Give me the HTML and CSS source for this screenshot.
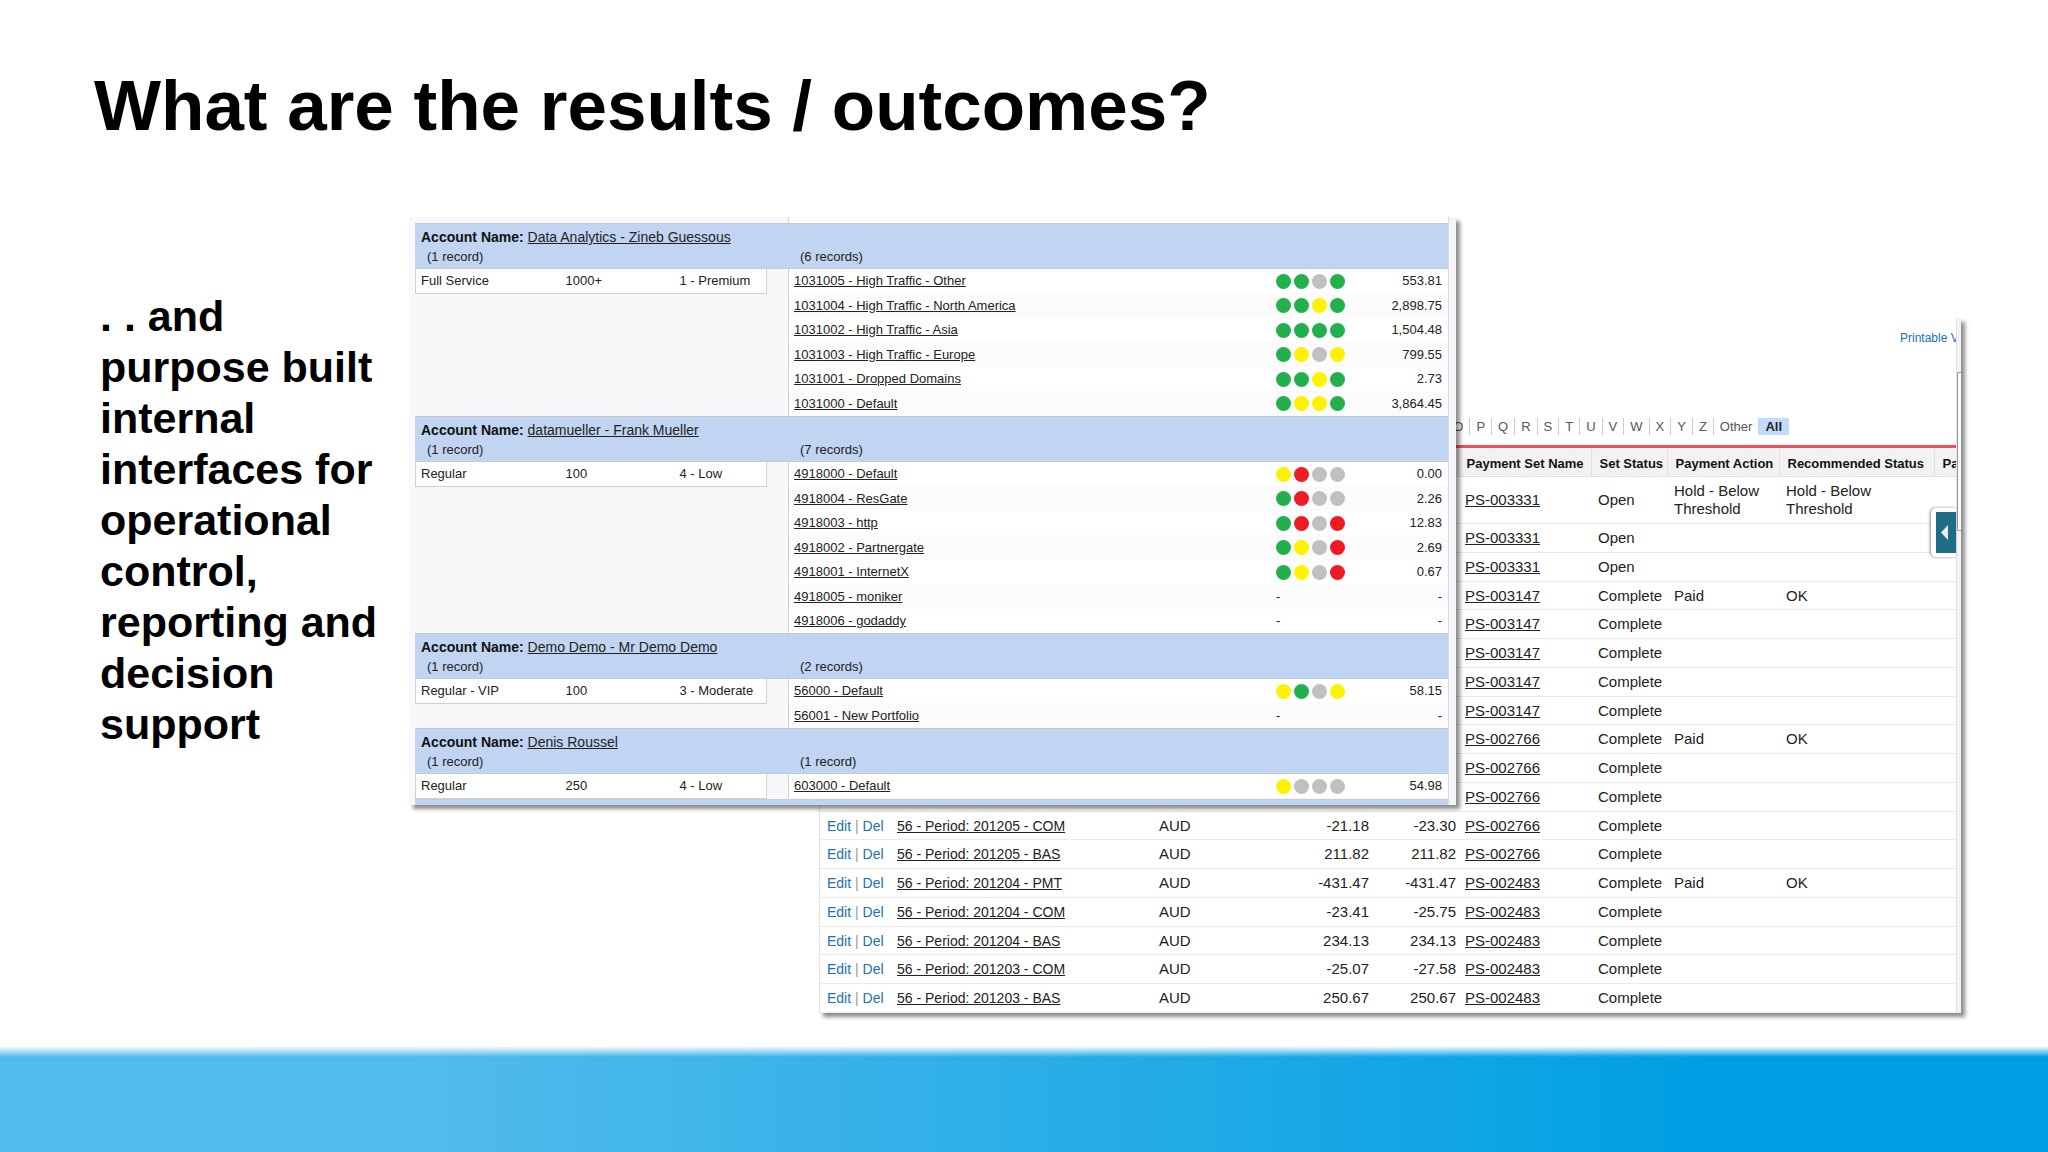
FILE: index.html
```html
<!DOCTYPE html>
<html lang="en">
<head>
<meta charset="utf-8">
<title>What are the results / outcomes?</title>
<link rel="stylesheet" href="styles.css">
</head>
<body>
<div class="slide">
<header class="slide-head"><h1>What are the results / outcomes?</h1></header>
<main class="slide-body">
<p class="lead">. . and purpose built internal interfaces for operational control, reporting and decision support</p>
<div class="stage">

<section class="window payments">
<div class="pay-main">
<div class="pay-top"><a class="printable" href="#">Printable View</a></div>
<nav class="alpha">
<a href="#">O</a><a href="#">P</a><a href="#">Q</a><a href="#">R</a><a href="#">S</a><a href="#">T</a><a href="#">U</a><a href="#">V</a><a href="#">W</a><a href="#">X</a><a href="#">Y</a><a href="#">Z</a><a href="#">Other</a><a class="current" href="#">All</a>
</nav>
<table class="pay-table">
<colgroup><col class="c-act"><col class="c-name"><col class="c-cur"><col class="c-amt"><col class="c-total"><col class="c-set"><col class="c-status"><col class="c-action"><col class="c-rec"><col class="c-last"></colgroup>
<thead><tr><th></th><th></th><th></th><th></th><th></th><th>Payment Set Name</th><th>Set Status</th><th>Payment Action</th><th>Recommended Status</th><th>Payee</th></tr></thead>
<tbody>
<tr class="tall"><td colspan="5"></td><td><a href="#">PS-003331</a></td><td>Open</td><td>Hold - Below Threshold</td><td class="rec">Hold - Below Threshold</td><td></td></tr>
<tr><td colspan="5"></td><td><a href="#">PS-003331</a></td><td>Open</td><td></td><td></td><td></td></tr>
<tr><td colspan="5"></td><td><a href="#">PS-003331</a></td><td>Open</td><td></td><td></td><td></td></tr>
<tr><td colspan="5"></td><td><a href="#">PS-003147</a></td><td>Complete</td><td>Paid</td><td>OK</td><td></td></tr>
<tr><td colspan="5"></td><td><a href="#">PS-003147</a></td><td>Complete</td><td></td><td></td><td></td></tr>
<tr><td colspan="5"></td><td><a href="#">PS-003147</a></td><td>Complete</td><td></td><td></td><td></td></tr>
<tr><td colspan="5"></td><td><a href="#">PS-003147</a></td><td>Complete</td><td></td><td></td><td></td></tr>
<tr><td colspan="5"></td><td><a href="#">PS-003147</a></td><td>Complete</td><td></td><td></td><td></td></tr>
<tr><td colspan="5"></td><td><a href="#">PS-002766</a></td><td>Complete</td><td>Paid</td><td>OK</td><td></td></tr>
<tr><td colspan="5"></td><td><a href="#">PS-002766</a></td><td>Complete</td><td></td><td></td><td></td></tr>
<tr><td colspan="5"></td><td><a href="#">PS-002766</a></td><td>Complete</td><td></td><td></td><td></td></tr>
<tr><td class="ops"><a href="#">Edit</a> | <a href="#">Del</a></td><td class="name"><a href="#">56 - Period: 201205 - COM</a></td><td>AUD</td><td class="num">-21.18</td><td class="num">-23.30</td><td><a href="#">PS-002766</a></td><td>Complete</td><td></td><td></td><td></td></tr>
<tr><td class="ops"><a href="#">Edit</a> | <a href="#">Del</a></td><td class="name"><a href="#">56 - Period: 201205 - BAS</a></td><td>AUD</td><td class="num">211.82</td><td class="num">211.82</td><td><a href="#">PS-002766</a></td><td>Complete</td><td></td><td></td><td></td></tr>
<tr><td class="ops"><a href="#">Edit</a> | <a href="#">Del</a></td><td class="name"><a href="#">56 - Period: 201204 - PMT</a></td><td>AUD</td><td class="num">-431.47</td><td class="num">-431.47</td><td><a href="#">PS-002483</a></td><td>Complete</td><td>Paid</td><td>OK</td><td></td></tr>
<tr><td class="ops"><a href="#">Edit</a> | <a href="#">Del</a></td><td class="name"><a href="#">56 - Period: 201204 - COM</a></td><td>AUD</td><td class="num">-23.41</td><td class="num">-25.75</td><td><a href="#">PS-002483</a></td><td>Complete</td><td></td><td></td><td></td></tr>
<tr><td class="ops"><a href="#">Edit</a> | <a href="#">Del</a></td><td class="name"><a href="#">56 - Period: 201204 - BAS</a></td><td>AUD</td><td class="num">234.13</td><td class="num">234.13</td><td><a href="#">PS-002483</a></td><td>Complete</td><td></td><td></td><td></td></tr>
<tr><td class="ops"><a href="#">Edit</a> | <a href="#">Del</a></td><td class="name"><a href="#">56 - Period: 201203 - COM</a></td><td>AUD</td><td class="num">-25.07</td><td class="num">-27.58</td><td><a href="#">PS-002483</a></td><td>Complete</td><td></td><td></td><td></td></tr>
<tr><td class="ops"><a href="#">Edit</a> | <a href="#">Del</a></td><td class="name"><a href="#">56 - Period: 201203 - BAS</a></td><td>AUD</td><td class="num">250.67</td><td class="num">250.67</td><td><a href="#">PS-002483</a></td><td>Complete</td><td></td><td></td><td></td></tr>
</tbody>
</table>
<button class="side-tab" type="button" aria-label="Open sidebar"><svg viewBox="0 0 20 41" width="20" height="41"><rect width="20" height="41" fill="#1f6c86"/><path d="M5 20.500L12 13V28Z" fill="#e8eef0"/></svg></button>
</div>
<div class="rail"><div class="thumb"></div></div>
</section>

<section class="window accounts">
<div class="strip"></div>

<article class="account">
<div class="acc-head"><p class="title"><b>Account Name:</b> <a href="#">Data Analytics - Zineb Guessous</a></p><p>(1 record)</p><p>(6 records)</p></div>
<div class="acc-body">
<div class="acc-left"><table class="plan"><tr><td>Full Service</td><td>1000+</td><td>1 - Premium</td></tr></table></div>
<table class="folios">
<tr><td><a href="#">1031005 - High Traffic - Other</a></td><td><span class="dots"><i class="g"></i><i class="g"></i><i></i><i class="g"></i></span></td><td>553.81</td></tr>
<tr><td><a href="#">1031004 - High Traffic - North America</a></td><td><span class="dots"><i class="g"></i><i class="g"></i><i class="y"></i><i class="g"></i></span></td><td>2,898.75</td></tr>
<tr><td><a href="#">1031002 - High Traffic - Asia</a></td><td><span class="dots"><i class="g"></i><i class="g"></i><i class="g"></i><i class="g"></i></span></td><td>1,504.48</td></tr>
<tr><td><a href="#">1031003 - High Traffic - Europe</a></td><td><span class="dots"><i class="g"></i><i class="y"></i><i></i><i class="y"></i></span></td><td>799.55</td></tr>
<tr><td><a href="#">1031001 - Dropped Domains</a></td><td><span class="dots"><i class="g"></i><i class="g"></i><i class="y"></i><i class="g"></i></span></td><td>2.73</td></tr>
<tr><td><a href="#">1031000 - Default</a></td><td><span class="dots"><i class="g"></i><i class="y"></i><i class="y"></i><i class="g"></i></span></td><td>3,864.45</td></tr>
</table>
</div>
</article>

<article class="account">
<div class="acc-head"><p class="title"><b>Account Name:</b> <a href="#">datamueller - Frank Mueller</a></p><p>(1 record)</p><p>(7 records)</p></div>
<div class="acc-body">
<div class="acc-left"><table class="plan"><tr><td>Regular</td><td>100</td><td>4 - Low</td></tr></table></div>
<table class="folios">
<tr><td><a href="#">4918000 - Default</a></td><td><span class="dots"><i class="y"></i><i class="r"></i><i></i><i></i></span></td><td>0.00</td></tr>
<tr><td><a href="#">4918004 - ResGate</a></td><td><span class="dots"><i class="g"></i><i class="r"></i><i></i><i></i></span></td><td>2.26</td></tr>
<tr><td><a href="#">4918003 - http</a></td><td><span class="dots"><i class="g"></i><i class="r"></i><i></i><i class="r"></i></span></td><td>12.83</td></tr>
<tr><td><a href="#">4918002 - Partnergate</a></td><td><span class="dots"><i class="g"></i><i class="y"></i><i></i><i class="r"></i></span></td><td>2.69</td></tr>
<tr><td><a href="#">4918001 - InternetX</a></td><td><span class="dots"><i class="g"></i><i class="y"></i><i></i><i class="r"></i></span></td><td>0.67</td></tr>
<tr><td><a href="#">4918005 - moniker</a></td><td>-</td><td>-</td></tr>
<tr><td><a href="#">4918006 - godaddy</a></td><td>-</td><td>-</td></tr>
</table>
</div>
</article>

<article class="account">
<div class="acc-head"><p class="title"><b>Account Name:</b> <a href="#">Demo Demo - Mr Demo Demo</a></p><p>(1 record)</p><p>(2 records)</p></div>
<div class="acc-body">
<div class="acc-left"><table class="plan"><tr><td>Regular - VIP</td><td>100</td><td>3 - Moderate</td></tr></table></div>
<table class="folios">
<tr><td><a href="#">56000 - Default</a></td><td><span class="dots"><i class="y"></i><i class="g"></i><i></i><i class="y"></i></span></td><td>58.15</td></tr>
<tr><td><a href="#">56001 - New Portfolio</a></td><td>-</td><td>-</td></tr>
</table>
</div>
</article>

<article class="account">
<div class="acc-head"><p class="title"><b>Account Name:</b> <a href="#">Denis Roussel</a></p><p>(1 record)</p><p>(1 record)</p></div>
<div class="acc-body">
<div class="acc-left"><table class="plan"><tr><td>Regular</td><td>250</td><td>4 - Low</td></tr></table></div>
<table class="folios">
<tr><td><a href="#">603000 - Default</a></td><td><span class="dots"><i class="y"></i><i></i><i></i><i></i></span></td><td>54.98</td></tr>
</table>
</div>
</article>
<div class="next-head"></div>
</section>

</div>
</main>
<footer class="band"></footer>
</div>
</body>
</html>
```

FILE: styles.css
```css
* { box-sizing: border-box; }

body {
  margin: 0;
  background: #fff;
  color: #222;
  font-family: "Liberation Sans", Arial, sans-serif;
}

h1, p { margin: 0; }
table { border-collapse: collapse; border-spacing: 0; }
td, th { padding: 0; }
a { color: inherit; }

.slide {
  display: flex;
  flex-direction: column;
  min-height: 100vh;
}

.slide-head { padding: 64px 94px 0; }

.slide-head h1 {
  color: #000;
  font-size: 71px;
  line-height: 84px;
}

.slide-body {
  display: grid;
  grid-template-columns: 309px minmax(0, 1fr);
  padding: 69px 87px 33px 100px;
}

.lead {
  padding: 74px 18px 0 0;
  color: #000;
  font-size: 43px;
  font-weight: bold;
  line-height: 51px;
}

/* The two windows share the middle column, so they overlap. */
.stage {
  display: grid;
  grid-template-columns: minmax(0, 410fr) minmax(0, 637fr) minmax(0, 505fr);
  align-items: start;
}

.window { box-shadow: 4px 4px 4px rgba(0, 0, 0, .45); }

/* Accounts window */
.accounts {
  grid-column: 1 / 3;
  grid-row: 1;
  z-index: 1;
  padding: 0 8px 0 6px;
  background: linear-gradient(to left, #f3f5f9 7px, #d9dce2 7px, #d9dce2 8px, #f8f8fa 8px);
  font-size: 13px;
}

.strip {
  height: 6px;
  margin-left: 373px;
  border-left: 1px solid #d4d4d8;
  background: #fff;
}

.acc-head {
  display: grid;
  grid-template-columns: 373px minmax(0, 1fr);
  padding: 4px 0 2px;
  border: solid #c5cad6;
  border-width: 1px 0;
  background: #c1d4f1;
  line-height: 19px;
}

.acc-head p { padding-left: 12px; }

.acc-head .title {
  grid-column: 1 / 3;
  padding-left: 6px;
  font-size: 14px;
}

.acc-head b { color: #111; }

.acc-body {
  display: grid;
  grid-template-columns: 373px minmax(0, 1fr);
  align-items: start;
  line-height: 22px;
}

.plan {
  width: 352px;
  height: 25px;
  table-layout: fixed;
  border: solid #d0d0d4;
  border-width: 0 1px 1px;
  background: #fff;
}

.plan td { padding-left: 5px; }
.plan td:nth-child(1) { width: 145px; }
.plan td:nth-child(2) { width: 114px; }

.folios {
  width: 100%;
  table-layout: fixed;
  border-left: 1px solid #d4d4d8;
  background: #fff;
}

.folios tr:nth-child(odd) { height: 24px; }
.folios tr:nth-child(even) { height: 25px; background: #fbfbfc; }
.folios td:first-child { padding-left: 5px; }
.folios td:nth-child(2) { width: 74px; }
.folios td:nth-child(3) { width: 98px; padding-right: 6px; text-align: right; }

.dots { display: flex; gap: 3px; }

.dots i {
  width: 15px;
  height: 15px;
  border-radius: 50%;
  background: #c0c0c0;
}

.dots .g { background: #22b04c; }
.dots .y { background: #fff200; }
.dots .r { background: #ed1c24; }

.next-head {
  height: 6px;
  border-top: 1px solid #c5cad6;
  background: #c1d4f1;
}

/* Payments window */
.payments {
  grid-column: 2 / 4;
  grid-row: 1;
  display: flex;
  margin-top: 101px;
  background: #fff;
}

.pay-main {
  position: relative;
  flex: 1;
  min-width: 0;
  border-left: 1px solid #e2e2e6;
}

.pay-top {
  display: flex;
  justify-content: flex-end;
  height: 100px;
  padding-top: 12px;
}

.printable {
  width: 56px;
  height: 16px;
  overflow: hidden;
  color: #2070b4;
  font-size: 12px;
  line-height: 16px;
  text-decoration: none;
  white-space: nowrap;
}

.alpha {
  display: flex;
  justify-content: flex-end;
  height: 27px;
  padding-right: 167px;
  font-size: 13px;
  line-height: 17px;
}

.alpha a {
  height: 17px;
  padding: 0 6px;
  border-right: 1px solid #ccc;
  color: #555;
  text-decoration: none;
}

.alpha a:nth-last-child(2) { border-right: 0; }

.alpha .current {
  padding: 0 7px;
  border-right: 0;
  background: #c3dbfa;
  color: #222;
  font-weight: bold;
}

.pay-table {
  width: 100%;
  table-layout: fixed;
  border-top: 3px solid #f4505c;
  font-size: 15px;
  line-height: 18px;
}

.c-act { width: 70px; }
.c-cur { width: 117px; }
.c-amt { width: 100px; }
.c-total { width: 89px; }
.c-set { width: 133px; }
.c-status { width: 76px; }
.c-action { width: 112px; }
.c-rec { width: 155px; }
.c-last { width: 22px; }

.pay-table th {
  height: 30px;
  padding: 3px 0 0 8px;
  overflow: hidden;
  border-right: 1px solid #e0e0e0;
  border-bottom: 1px solid #e0e0e0;
  background: #f2f2f2;
  color: #111;
  font-size: 13px;
  text-align: left;
  white-space: nowrap;
}

.pay-table th:last-child { border-right: 0; }

.pay-table td {
  height: 29px;
  padding-left: 7px;
  border-bottom: 1px solid #eaeaec;
}

.pay-table tr:nth-child(4n) td { height: 28px; }
.pay-table .tall td { height: 47px; }
.pay-table td.rec { padding-right: 50px; }
.pay-table .num { padding: 0; text-align: right; }
.pay-table .num + .num { padding-right: 2px; }
.pay-table .name { font-size: 14px; }

.pay-table .ops {
  color: #999;
  font-size: 14px;
}

.ops a {
  color: #2070b4;
  text-decoration: none;
}

.side-tab {
  position: absolute;
  top: 190px;
  right: 0;
  padding: 4px 0 4px 5px;
  border: 0;
  border-radius: 5px 0 0 5px;
  background: #fff;
  box-shadow: -1px 0 3px rgba(0, 0, 0, .45);
}

.side-tab svg { display: block; }

.rail {
  width: 5px;
  padding-top: 54px;
  border-left: 1px solid #e2e2e6;
  background: #f3f3f5;
}

.thumb {
  height: 159px;
  border: 1px solid #999;
  border-right: 0;
  border-radius: 2px 0 0 2px;
  background: #fafafa;
}

.band {
  height: 106px;
  margin-top: auto;
  background:
    linear-gradient(#fff, rgba(255, 255, 255, 0) 11px),
    linear-gradient(to right, #53bbeb 20%, #009fe3 83%);
}
```
